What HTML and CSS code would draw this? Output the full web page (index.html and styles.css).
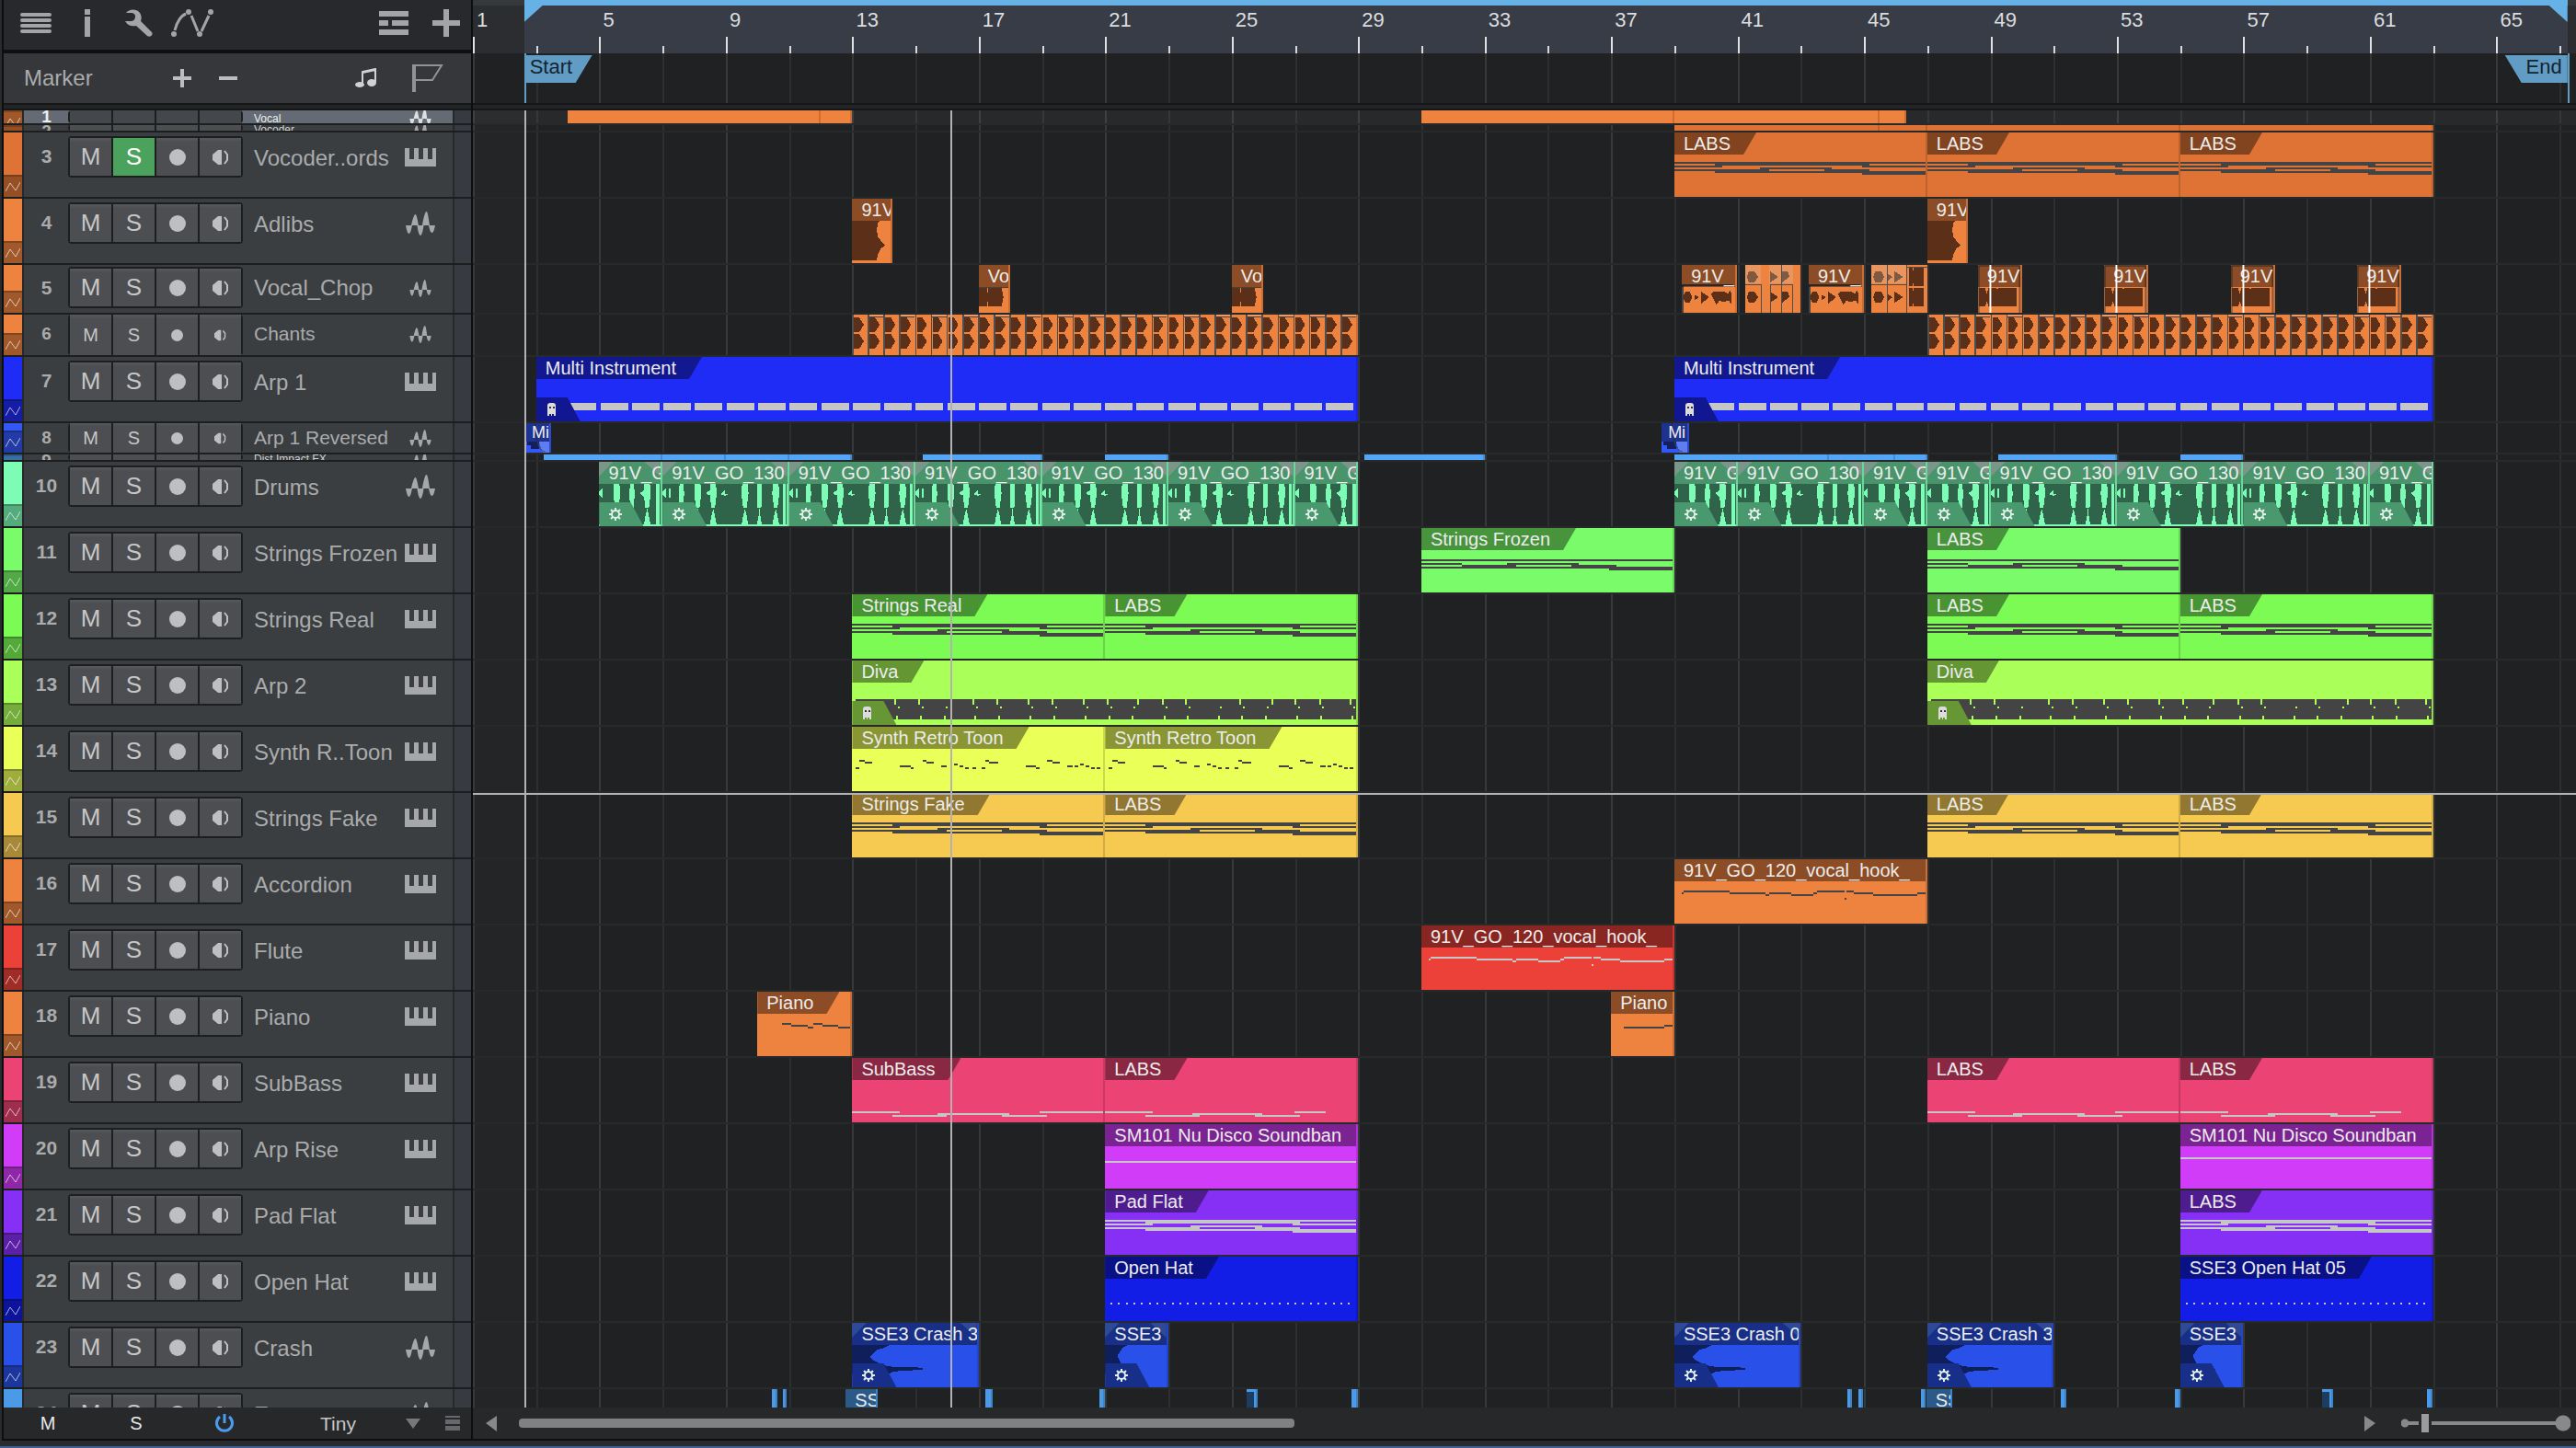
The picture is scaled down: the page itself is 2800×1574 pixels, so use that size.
FILE: index.html
```html
<!DOCTYPE html>
<html lang="en">
<head>
    <meta charset="UTF-8">
    <meta name="viewport" content="width=device-width, initial-scale=1.0">
    <title>Arrangement</title>
    <link rel="stylesheet" href="styles.css">
</head>
<body>
    <div class="app">
        <div class="workspace">
            <!-- Track list -->
            <div class="sidebar">
                <div class="toolbar">
                    <button class="tool menu-tool" aria-label="Menu">
                        <svg width="34" height="22"><path d="M2 2h30M2 8h30M2 14h30M2 20h30" stroke="#a3a4a6" stroke-width="4" stroke-linecap="round"/></svg>
                    </button>
                    <button class="tool info-tool" aria-label="Inspector">
                        <svg width="6" height="30"><path d="M0 0h6v6H0zM0 8h6v22H0z" fill="#a3a4a6"/></svg>
                    </button>
                    <button class="tool wrench-tool" aria-label="Options">
                        <svg width="30" height="30"><path d="M1 4C4 0 12-1 16 4c2 3 2 6 1 9l12 12c2 3-2 6-5 4L12 18c-4 1-9 0-12-5h6c3 0 5-2 5-5S9 4 6 4z" fill="#a3a4a6"/></svg>
                    </button>
                    <button class="tool" aria-label="Automation">
                        <svg width="48" height="31"><path d="M4 23C6 14 11 7 16 5M22 7l7 17M33 24l8-17" fill="none" stroke="#a3a4a6" stroke-width="3"/><g fill="#a3a4a6"><circle cx="3" cy="27" r="3"/><circle cx="19" cy="3" r="3"/><circle cx="31" cy="27" r="3"/><circle cx="43" cy="3" r="3"/></g></svg>
                    </button>
                    <span class="spacer"></span>
                    <button class="tool layers-tool" aria-label="Track list">
                        <svg width="32" height="26"><path d="M0 0h32v6H0zM0 10h10v6H0zM14 10h18v6H14zM0 20h32v6H0z" fill="#a3a4a6"/></svg>
                    </button>
                    <button class="tool" aria-label="Add track">
                        <svg width="30" height="30"><path d="M12 0h6v12h12v6H18v12h-6V18H0v-6h12z" fill="#a3a4a6"/></svg>
                    </button>
                </div>
                <div class="marker-head">
                    <span class="marker-title">Marker</span>
                    <button class="tool plus-tool" aria-label="Add marker">
                        <svg width="20" height="20"><path d="M8 0h4v8h8v4h-8v8H8v-8H0V8h8z" fill="#bcbdbf"/></svg>
                    </button>
                    <button class="tool" aria-label="Remove marker">
                        <svg width="20" height="20"><path d="M0 8h20v4H0z" fill="#bcbdbf"/></svg>
                    </button>
                    <span class="spacer"></span>
                    <button class="tool note-tool" aria-label="Timebase">
                        <svg width="24" height="22"><path d="M8 18V4l14-3v14M8 5l14-3" fill="none" stroke="#d0d1d3" stroke-width="2"/><ellipse cx="5" cy="18" rx="5" ry="3" fill="#d0d1d3"/><ellipse cx="18" cy="16" rx="5" ry="4" fill="#d0d1d3"/></svg>
                    </button>
                    <button class="tool" aria-label="Flag">
                        <svg width="34" height="30"><path d="M1 0v30M3 30V0" stroke="#909294" stroke-width="2"/><path d="M3 1h29L22 17H3" fill="none" stroke="#909294" stroke-width="2"/></svg>
                    </button>
                </div>
                <div class="divider"></div>
                <div class="track-list" id="track-list"></div>
                <div class="side-foot">
                    <button class="foot-btn">M</button>
                    <button class="foot-btn">S</button>
                    <button class="foot-btn" aria-label="Power">
                        <svg width="22" height="20"><path d="M6 3a8.5 8.5 0 1 0 10 0M11 0v10" fill="none" stroke="#4d9bf0" stroke-width="3"/></svg>
                    </button>
                    <select class="size-select" aria-label="Track height"><option>Tiny</option><option>Small</option><option>Normal</option></select>
                    <svg class="drop-arrow" width="16" height="11"><path d="M0 0h16L8 11z" fill="#77787a"/></svg>
                    <button class="tool" aria-label="Layout">
                        <svg width="16" height="16"><path d="M0 0h16v2H0zM0 4h16v5H0zM0 11h16v5H0z" fill="#66686d"/></svg>
                    </button>
                </div>
            </div>

            <!-- Arrangement -->
            <div class="arrange">
                <div class="ruler" id="ruler"></div>
                <div class="marker-lane" id="marker-lane"></div>
                <div class="divider"></div>
                <div class="lanes" id="lanes"></div>
                <div class="arrange-foot">
                    <button class="tool" aria-label="Scroll left"><svg width="12" height="17"><path d="M12 0v17L0 8z" fill="#87898b"/></svg></button>
                    <div class="scroll"><div class="scroll-thumb"></div></div>
                    <button class="tool" aria-label="Scroll right"><svg width="12" height="17"><path d="M0 0v17L12 8z" fill="#87898b"/></svg></button>
                    <input class="zoom" type="range" min="0" max="100" value="11" aria-label="Zoom">
                </div>
            </div>
        </div>
    </div>

    <script src="script.js"></script>
</body>
</html>
```

FILE: styles.css
```css
* {
    box-sizing: border-box;
    margin: 0;
    padding: 0;
}

body {
    font-family: "Liberation Sans", Arial, sans-serif;
    color: #aaabad;
    background-color: #212325;
    overflow: hidden;
}

button {
    border: none;
    background: none;
    color: inherit;
    font-family: inherit;
    cursor: pointer;
}

svg {
    display: block;
}

/* Window frame */
.app {
    height: 100vh;
    padding: 0 0 6px 2px;
    border-bottom: 2px solid #435f92;
    background-color: #292b2d;
}

.workspace {
    display: flex;
    height: 100%;
    border-left: 2px solid #0d0e0f;
    border-bottom: 2px solid #0d0e0f;
}

.spacer {
    flex: 1;
}

.divider {
    flex: none;
    height: 8px;
    background-color: #222426;
    border-top: 2px solid #161719;
    border-bottom: 2px solid #161719;
}

/* Sidebar */
.sidebar {
    display: flex;
    flex-direction: column;
    flex: none;
    width: 510px;
    border-right: 2px solid #0d0e0f;
}

.toolbar {
    display: flex;
    align-items: center;
    flex: none;
    height: 58px;
    padding: 0 12px 4px 18px;
    background-color: #28292d;
    border-bottom: 4px solid #0e0f10;
}

.menu-tool {
    margin-right: 36px;
}

.info-tool {
    margin-right: 38px;
}

.wrench-tool {
    margin-right: 20px;
}

.layers-tool {
    margin-right: 26px;
}

.marker-head {
    display: flex;
    align-items: center;
    flex: none;
    height: 54px;
    padding: 0 30px 0 22px;
    background-color: #36373b;
}

.marker-title {
    width: 162px;
    font-size: 24px;
}

.plus-tool {
    margin-right: 30px;
}

.note-tool {
    margin-right: 38px;
}

/* Track headers */
.track-list {
    flex: 1;
    overflow: hidden;
}

.track {
    display: flex;
    border-bottom: 2px solid #1c1e20;
    background-color: #3b3e40;
    overflow: hidden;
}

.track-color {
    display: flex;
    flex-direction: column;
    width: 22px;
    border-right: 2px solid #26282a;
}

.track-color .auto {
    height: 24px;
    margin-top: auto;
    padding: 6px 2px;
    border-top: 2px solid rgba(0, 0, 0, 0.2);
    background-color: rgba(0, 0, 0, 0.32);
}

.track-num {
    width: 48px;
    padding-left: 1px;
    font-size: 21px;
    font-weight: bold;
    line-height: 52px;
    text-align: center;
}

.track-btns {
    display: flex;
    align-self: flex-start;
    gap: 2px;
    width: 190px;
    height: 45px;
    margin-top: 4px;
    padding: 2px;
    border-radius: 4px;
    background-color: #1c1e20;
}

.track-btns button {
    display: flex;
    align-items: center;
    justify-content: center;
    flex: 1;
    font-size: 26px;
    color: #c5c6c8;
    background: linear-gradient(#58595c, #4d4e51 10%);
}

.track-btns button.on {
    color: #fff;
    background: #4ba25c;
}

.track-name {
    flex: 1;
    padding-left: 12px;
    font-size: 24px;
    line-height: 56px;
    white-space: nowrap;
}

.track-icon {
    display: flex;
    align-items: center;
    justify-content: center;
    width: 34px;
    height: 54px;
    margin-right: 18px;
}

.track-end {
    width: 20px;
    border-left: 2px solid #26282a;
    background-color: #383a41;
}

.track.medium .track-btns {
    margin-top: 2px;
}

.track.medium .track-num,
.track.medium .track-name {
    line-height: 50px;
}

.track.medium .track-icon {
    height: 50px;
}

.track.small .track-btns {
    align-self: stretch;
    height: auto;
    margin-top: 0;
    padding: 0 2px;
}

.track.small .track-btns button {
    font-size: 20px;
}

.track.small .track-num {
    font-size: 19px;
    line-height: 42px;
}

.track.small .track-name {
    font-size: 21px;
    line-height: 42px;
}

.track.small .track-icon {
    height: 42px;
}

.track.short .track-num,
.track.short .track-name {
    line-height: 32px;
}

.track.short .track-icon {
    height: 32px;
}

.track.folded .track-num {
    line-height: 14px;
}

.track.folded .track-name {
    font-size: 12px;
    line-height: 18px;
    color: #d0d1d3;
}

.track.folded .track-icon {
    height: 14px;
}

.track.thin .track-name {
    line-height: 10px;
}

.track.selected,
.track.selected .track-name {
    color: #eee;
    background-color: #646b74;
}

.track.selected .track-btns button {
    background: #44474c;
}

/* Sidebar footer */
.side-foot {
    display: flex;
    align-items: center;
    flex: none;
    height: 34px;
    padding-right: 12px;
    background-color: #27282a;
}

.foot-btn {
    display: flex;
    justify-content: center;
    width: 96px;
    font-size: 20px;
    color: #e8e8e8;
}

.size-select {
    flex: 1;
    padding-left: 56px;
    border: none;
    appearance: none;
    font-family: inherit;
    font-size: 21px;
    color: #c5c6c8;
    background: none;
}

.drop-arrow {
    margin-right: 27px;
}

/* Ruler */
.arrange {
    display: flex;
    flex-direction: column;
    flex: 1;
    min-width: 0;
    position: relative;
}

.ruler {
    position: relative;
    flex: none;
    height: 58px;
    overflow: hidden;
    background-color: #2b2d30;
    border-top: 6px solid #36393c;
}

.loop-range {
    position: absolute;
    top: 0;
    bottom: 0;
    background-color: #373c46;
}

.loop-bar {
    position: absolute;
    z-index: 2;
    top: 0;
    height: 6px;
    background-color: #66b1e6;
}

.loop-corner {
    position: absolute;
    top: 0;
    width: 20px;
    height: 18px;
    background-color: #66b1e6;
}

.loop-corner.left {
    left: 0;
    clip-path: polygon(0 0, 100% 0, 0 100%);
}

.loop-corner.right {
    right: 0;
    clip-path: polygon(0 0, 100% 0, 100% 100%);
}

.tick {
    position: absolute;
    bottom: 0;
    height: 8px;
    border-left: 2px solid #d8d9da;
}

.tick.major {
    height: 48px;
    padding-left: 2px;
    border-image: linear-gradient(transparent 62%, #e0e0e0 62%) 1;
    border-width: 0 0 0 2px;
    font-size: 22px;
    line-height: 24px;
    color: #dcdddf;
}

/* Marker lane */
.marker-lane {
    position: relative;
    flex: none;
    height: 54px;
    overflow: hidden;
    background-color: #1f2122;
}

.marker-tag {
    position: absolute;
    z-index: 2;
    top: 2px;
    height: 30px;
    font-size: 22px;
    line-height: 26px;
    color: #16242e;
    background-color: #619cc5;
}

.marker-tag.start {
    width: 74px;
    padding-left: 6px;
    clip-path: polygon(0 0, 100% 0, calc(100% - 18px) 100%, 0 100%);
}

.marker-tag.end {
    width: 68px;
    padding-right: 6px;
    text-align: right;
    clip-path: polygon(0 0, 100% 0, 100% 100%, 18px 100%);
}

.marker-stem {
    position: absolute;
    top: 0;
    bottom: 0;
    width: 2px;
    background-color: #619cc5;
}

/* Lanes */
.lanes {
    position: relative;
    flex: 1;
    overflow: hidden;
    background-color: #1f2122;
}

.before-start {
    position: absolute;
    top: 0;
    bottom: 0;
    left: 0;
    background-color: #232526;
}

.grid-line {
    position: absolute;
    top: 0;
    bottom: 0;
    width: 2px;
    background-color: #2d2f31;
}

.grid-line.major {
    background-color: #38393b;
}

.lane {
    position: relative;
    border-bottom: 2px solid #28292b;
}

.lane.selected {
    background-color: rgba(255, 255, 255, 0.04);
}

.playhead {
    position: absolute;
    z-index: 3;
    top: 0;
    bottom: 0;
    width: 2px;
    background-color: #b2b2b2;
}

.cursor-row {
    position: absolute;
    z-index: 3;
    top: 742px;
    left: 0;
    right: 0;
    height: 2px;
    background-color: #b2b2b2;
}

/* Clips */
.clip {
    position: absolute;
    top: 0;
    bottom: 0;
    overflow: hidden;
    border-right: 2px solid rgba(0, 0, 0, 0.15);
}

.clip > svg {
    position: absolute;
    top: 0;
    left: 0;
    width: 100%;
    height: 100%;
}

.clip > svg.front {
    z-index: 2;
}

.clip-title {
    position: relative;
    z-index: 1;
    width: max-content;
    height: 24px;
    padding: 0 28px 0 10px;
    font-size: 20px;
    line-height: 24px;
    color: #ececec;
    white-space: nowrap;
    background-color: rgba(0, 0, 0, 0.41);
    clip-path: polygon(0 0, 100% 0, calc(100% - 14px) 100%, 0 100%);
}

.clip.audio .clip-title {
    width: 100%;
    padding-right: 0;
    overflow: hidden;
    clip-path: none;
}

.clip.short .clip-title {
    height: 20px;
    padding-left: 7px;
    font-size: 18px;
    line-height: 20px;
}

.clip.sliced {
    border-right: none;
    background: none;
}

.clip-badge {
    position: absolute;
    z-index: 1;
    bottom: 0;
    left: 0;
    width: 48px;
    height: 26px;
    padding: 6px 0 0 11px;
    clip-path: polygon(0 0, 34px 0, 100% 100%, 0 100%);
}

/* Arrangement footer */
.arrange-foot {
    display: flex;
    align-items: center;
    flex: none;
    height: 34px;
    padding: 0 6px 0 14px;
    background-color: #27282a;
}

.scroll {
    flex: 1;
    margin-left: 24px;
}

.scroll-thumb {
    width: 42%;
    height: 10px;
    border-radius: 4px;
    background-color: #7f8183;
}

.zoom {
    width: 184px;
    height: 20px;
    margin-left: 28px;
    appearance: none;
    background:
        radial-gradient(circle at 4px 10px, #87898b 4px, transparent 5px),
        radial-gradient(circle at calc(100% - 8px) 10px, #87898b 8px, transparent 9px),
        linear-gradient(#87898b, #87898b) center / calc(100% - 8px) 4px no-repeat;
}

.zoom::-webkit-slider-thumb {
    appearance: none;
    width: 14px;
    height: 20px;
    border: solid #27282a;
    border-width: 0 3px;
    background-color: #9b9c9e;
}
```

FILE: script.js
```js
// Number of bars that fit in the visible arrangement
const BARS = 66.52;
const LOOP_START = 2.62;
const LOOP_END = 67.25;
const PLAYHEAD = 16.09;

const DARK = "#444444";
const LIGHT = "#c6c6c6";

// [x, y, width], every note is 2px high. Widths are for an 8 bar clip
const CHORDS = [
    [0, 32, 275], [44, 34, 170], [0, 36, 52], [206, 36, 69], [94, 38, 78],
    [0, 40, 104], [164, 40, 50], [44, 42, 231], [206, 44, 69]
];
const FROZEN = [
    [0, 34, 275], [0, 38, 44], [44, 40, 60], [94, 38, 78], [164, 40, 50], [0, 42, 275], [206, 44, 69]
];
const BASS_A = [[0, 58, 52], [206, 58, 69], [94, 60, 78], [44, 62, 60], [164, 62, 50]];
const BASS_B = [[0, 58, 52], [208, 58, 34], [96, 60, 76], [44, 62, 60], [164, 62, 50]];
const HOOK = [
    [10, 34, 50], [156, 34, 30], [188, 34, 8], [8, 36, 2], [60, 36, 40], [104, 36, 24], [152, 36, 4],
    [196, 36, 22], [266, 36, 9], [100, 38, 4], [128, 38, 24], [218, 38, 48], [186, 42, 2]
];
const RETRO = [
    [8, 36, 6], [78, 36, 4], [146, 36, 4], [214, 36, 6], [14, 38, 8], [82, 38, 8], [150, 38, 10], [220, 38, 8],
    [112, 40, 4], [250, 40, 4], [52, 42, 12], [98, 42, 6], [118, 42, 4], [190, 42, 12], [236, 42, 6],
    [244, 42, 4], [256, 42, 4], [4, 44, 4], [64, 44, 4], [124, 44, 4], [132, 44, 4], [142, 44, 4],
    [202, 44, 4], [262, 44, 4], [268, 44, 4]
];
const PIANO_A = [[28, 34, 10], [62, 34, 10], [38, 36, 18], [72, 36, 18], [56, 38, 6], [90, 38, 13]];
const PIANO_B = [[14, 38, 46], [60, 36, 10]];

const FX = [[3.24, 3.76], [7, 2], [9, 2], [11, 2], [15.24, 3.76], [21, 2], [29.2, 3.8],
    [39, 4.9], [43.9, 2.1], [46, 1], [49.24, 3.76], [55, 2]];
const DRUMS = [[5, 2], [7, 4], [11, 4], [15, 4], [19, 4], [23, 4], [27, 2],
    [39, 2], [41, 4], [45, 2], [47, 2], [49, 4], [53, 4], [57, 4], [61, 2]];
const EXTRA = [[10.46, .17], [10.81, .12], [17.22, .23], [20.83, .17], [28.8, .2], [44.46, .17],
    [44.81, .17], [46.79, .17], [51.22, .17], [54.83, .17], [62.8, .17]];

const tracks = [
    { n: 1, name: "Vocal", h: 16, color: "#ee823f", icon: "wave", size: "small folded selected",
        clips: [[4, 8], [12, 1], [31, 8], [39, 6.5], [45.5, .85]].map(c => ({ at: c[0], len: c[1] })) },
    { n: 2, name: "Vocoder", h: 8, color: "#de7335", icon: "wave", size: "small folded thin",
        clips: [[39, 6.5], [45.5, 1.5], [47, 8], [55, 8]].map(c => ({ at: c[0], len: c[1] })) },
    { n: 3, name: "Vocoder..ords", h: 72, color: "#de7335", icon: "keys", solo: true,
        clips: [39, 47, 55].map(at => ({ at, len: 8, title: "LABS", notes: CHORDS })) },
    { n: 4, name: "Adlibs", h: 72, color: "#ee823f", icon: "wave",
        clips: [13, 47].map(at => ({ at, len: 1.28, title: "91V", type: "adlib" })) },
    { n: 5, name: "Vocal_Chop", h: 54, color: "#ee823f", icon: "wave", size: "medium",
        clips: [
            { at: 17, len: 1, title: "Vo", type: "vo" },
            { at: 25, len: 1, title: "Vo", type: "vo" },
            { at: 39.24, len: 1.75, title: "91V_", type: "chop" },
            { at: 41.23, len: 1.75, type: "slicesA" },
            { at: 43.25, len: 1.75, title: "91V_", type: "chop" },
            { at: 45.23, len: 1.77, type: "slicesB" },
            ...[49, 53, 57, 61].map(b => ({ at: b - .4, len: 1.4, title: "91V", type: "cue" }))
        ] },
    { n: 6, name: "Chants", h: 46, color: "#ee823f", icon: "wave", size: "small",
        clips: [13, 47].map(at => ({ at, len: 16, type: "chants" })) },
    { n: 7, name: "Arp 1", h: 72, color: "#1f2cf5", icon: "keys",
        clips: [{ at: 3, len: 26, title: "Multi Instrument", type: "arp" }, { at: 39, len: 24, title: "Multi Instrument", type: "arp" }] },
    { n: 8, name: "Arp 1 Reversed", h: 34, color: "#3358f5", icon: "wave", size: "small short",
        clips: [{ at: 2.66, len: .82, title: "Mi", type: "reversed" }, { at: 38.6, len: .87, title: "Mi", type: "reversed" }] },
    { n: 9, name: "Dist Impact FX", h: 8, color: "#52a5f7", icon: "wave", size: "small folded thin",
        clips: FX.map(c => ({ at: c[0], len: c[1] })) },
    { n: 10, name: "Drums", h: 72, color: "#7dfcb6", icon: "wave",
        clips: DRUMS.map(c => ({ at: c[0], len: c[1], title: c[1] === 2 ? "91V_G" : "91V_GO_130", type: "drums" })) },
    { n: 11, name: "Strings Frozen", h: 72, color: "#7afb69", icon: "keys",
        clips: [{ at: 31, len: 8, title: "Strings Frozen", notes: FROZEN }, { at: 47, len: 8, title: "LABS", notes: FROZEN }] },
    { n: 12, name: "Strings Real", h: 72, color: "#7dfb55", icon: "keys",
        clips: [[13, "Strings Real"], [21, "LABS"], [47, "LABS"], [55, "LABS"]].map(c => ({ at: c[0], len: 8, title: c[1], notes: CHORDS })) },
    { n: 13, name: "Arp 2", h: 72, color: "#abff59", icon: "keys",
        clips: [13, 47].map(at => ({ at, len: 16, title: "Diva", type: "diva" })) },
    { n: 14, name: "Synth R..Toon", h: 72, color: "#ebff59", icon: "keys",
        clips: [13, 21].map(at => ({ at, len: 8, title: "Synth Retro Toon", notes: RETRO })) },
    { n: 15, name: "Strings Fake", h: 72, color: "#f6ca51", icon: "keys",
        clips: [[13, "Strings Fake"], [21, "LABS"], [47, "LABS"], [55, "LABS"]].map(c => ({ at: c[0], len: 8, title: c[1], notes: CHORDS })) },
    { n: 16, name: "Accordion", h: 72, color: "#ee823f", icon: "keys",
        clips: [{ at: 39, len: 8, title: "91V_GO_120_vocal_hook_", notes: HOOK, type: "full" }] },
    { n: 17, name: "Flute", h: 72, color: "#eb4138", icon: "keys", ink: LIGHT,
        clips: [{ at: 31, len: 8, title: "91V_GO_120_vocal_hook_", notes: HOOK, type: "full" }] },
    { n: 18, name: "Piano", h: 72, color: "#ee823f", icon: "keys",
        clips: [{ at: 10, len: 3, title: "Piano", notes: PIANO_A }, { at: 37, len: 2, title: "Piano", notes: PIANO_B, type: "full" }] },
    { n: 19, name: "SubBass", h: 72, color: "#eb4373", icon: "keys", ink: LIGHT,
        clips: [
            { at: 13, len: 8, title: "SubBass", notes: BASS_A }, { at: 21, len: 8, title: "LABS", notes: BASS_B },
            { at: 47, len: 8, title: "LABS", notes: BASS_A }, { at: 55, len: 8, title: "LABS", notes: BASS_B }
        ] },
    { n: 20, name: "Arp Rise", h: 72, color: "#d13cf8", icon: "keys", ink: LIGHT,
        clips: [
            { at: 21, len: 8, title: "SM101 Nu Disco Soundban", notes: [[0, 40, 275]], type: "full" },
            { at: 55, len: 8, title: "SM101 Nu Disco Soundban", notes: [[0, 36, 275]], type: "full" }
        ] },
    { n: 21, name: "Pad Flat", h: 72, color: "#8730f5", icon: "keys", ink: LIGHT,
        clips: [{ at: 21, len: 8, title: "Pad Flat", notes: CHORDS }, { at: 55, len: 8, title: "LABS", notes: CHORDS }] },
    { n: 22, name: "Open Hat", h: 72, color: "#121ee6", icon: "keys", ink: LIGHT,
        clips: [{ at: 21, len: 8, title: "Open Hat", type: "hats" }, { at: 55, len: 8, title: "SSE3 Open Hat 05", type: "hats" }] },
    { n: 23, name: "Crash", h: 72, color: "#2950e8", icon: "wave",
        clips: [[13, 4, "SSE3 Crash 3"], [21, 2, "SSE3"], [39, 4, "SSE3 Crash 0"], [47, 4, "SSE3 Crash 3"], [55, 2, "SSE3"]].map(c => ({ at: c[0], len: c[1], title: c[2], type: "crash" })) },
    { n: 24, name: "Extra", h: 72, color: "#4a9ae8", icon: "wave",
        clips: [
            ...EXTRA.map(c => ({ at: c[0], len: c[1] })),
            { at: 12.79, len: 1, title: "SS", type: "full" }, { at: 46.97, len: .81, title: "SS", type: "full" },
            { at: 25.48, len: .35, type: "hollow" }, { at: 59.49, len: .35, type: "hollow" }
        ] }
];

const ghost = `<svg width="12" height="14"><path d="M1 3Q1 0 4 0h3q3 0 3 3v11H8v-2H6v2H5v-2H3v2H1z" fill="#dcdcdc"/><path d="M3 4h2v2H3zM7 4h2v2H7z" fill="#333"/></svg>`;
const gear = `<svg width="14" height="14"><circle cx="7" cy="7" r="4" fill="none" stroke="#e2eee8" stroke-width="2"/><path d="M7 0v3M7 11v3M0 7h3M11 7h3M2 2l2 2M10 10l2 2M12 2l-2 2M4 10l-2 2" stroke="#e2eee8" stroke-width="2"/></svg>`;
const zigzag = `<svg width="16" height="10"><path d="M0 10L5 1l6 8 5-9" fill="none" stroke="#fff" stroke-opacity=".65"/></svg>`;

function pct(bars) {
    return (bars / BARS * 100).toFixed(3) + "%";
}

function stretch(w, h, body) {
    return `<svg viewBox="0 0 ${w} ${h}" preserveAspectRatio="none" shape-rendering="crispEdges">${body}</svg>`;
}

function noteRects(notes, ink) {
    return notes.map(n => `<rect x="${n[0]}" y="${n[1]}" width="${n[2]}" height="2" fill="${ink}"/>`).join("");
}

function badge(color, icon) {
    return `<div class="clip-badge" style="background-color:${color}">${icon}</div>`;
}

// Fade handles in the two top corners
function fades(w, color) {
    return `<svg viewBox="0 0 ${w} 70" preserveAspectRatio="none"><path d="M0 0h16L0 16zM${w} 0h-18l18 16z" fill="${color}"/></svg>`;
}

// Diamond shaped transient, split into two channels
function lens(x, w) {
    return `M${x - w / 2} 24h${w}l1 10-${w / 2 - 1} 16h-4l-${w / 2 - 1}-16zM${x} 51l${w / 2 - 1} 8 2 11h-${w + 2}l2-11z`;
}

const art = {
    adlib: () => stretch(44, 70, `<path d="M0 24h32l-2 2-2 8 2 8 4 5 4 4-5 3-3 6-2 7H0z" fill="#5c3018"/>`),
    vo: () => stretch(34, 52, `<path d="M0 24h34v1H0z" fill="${DARK}"/><path d="M0 25h9l1 5 1-5h15l2 10-2 10H11l-1-5-1 5H0z" fill="#5c3018"/>`),
    chop: () => stretch(60, 52, `<path d="M0 22h58M1 22v30" stroke="${DARK}" stroke-width="2"/><path d="M4 29h5l3 6-3 6H4l-3-6zM14 32l5 3-5 4zM22 29l9 6-9 7zM33 32l3-3h11l5 2 2-3 2 3v12l-3-4-6 1-5-1-3 4-4-7z" fill="#5c3018"/>`),
    slicesA: () => stretch(60, 52, `<rect width="60" height="52" fill="#ee823f"/><path d="M0 0h17v20H0zM26 0h26v20H26z" fill="#e8955f"/>
        <path d="M4 7h6l4 6-4 6H4l-2-6zM27 7l9 6-9 6zM40 7h6l2 6-8 6z" fill="#7f5a40"/>
        <path d="M4 29h6l4 6-4 6H4l-2-6zM27 29l9 6-9 6zM40 29h6l2 6-8 6z" fill="#5c3018"/>
        <path d="M0 21h17v31M27 52V21h24v31M39 0v52" fill="none" stroke="#4d4e50" stroke-width="1"/>`),
    slicesB: () => stretch(60, 52, `<rect width="60" height="52" fill="#ee823f"/><path d="M0 0h38v20H0z" fill="#e8955f"/>
        <path d="M4 7h7l3 6-3 6H4l-2-6zM18 10l5 3-5 4zM25 7l9 6-9 6z" fill="#7f5a40"/>
        <path d="M4 29h7l3 6-3 6H4l-2-6zM18 32l5 3-5 4zM25 29l9 6-9 6z" fill="#5c3018"/>
        <path d="M40 3h4l1 3 1-3h10v20H46l-1-3-1 3h-4zM40 25h4l1 3 1-3h10v20H46l-1-3-1 3h-4z" fill="#5c3018"/>
        <path d="M0 21h38V2h22M17 0v52M38 0v52" fill="none" stroke="#4d4e50" stroke-width="1"/>`),
    cue: () => stretch(48, 52, `<path d="M1 52V1h46v51" fill="none" stroke="${DARK}" stroke-width="1"/><path d="M1 25h7l2 6 2-6h9l1 2 1-2h21v20H12l-2-5-2 5H1z" fill="#5c3018"/>`) +
        `<svg class="front" viewBox="0 0 48 52" preserveAspectRatio="none"><rect x="13" width="2" height="52" fill="#fff"/></svg>`,
    chants: () => {
        let body = "";
        for (let i = 0; i < 32; i++) {
            const x = i * 17.2;
            const top = i % 2 ? `<rect x="${x}" width="17" height="2" fill="#ee9a68"/><rect x="${x}" y="2" width="17" height="1" fill="${DARK}"/>` : "";
            body += `${top}<path d="M${x + 2} 3h6l5 8-5 8h-6zM${x + 2} 21h6l5 8-5 8h-6z" fill="#5c3018"/><rect x="${x}" width="1.6" height="44" fill="#4d4e50"/>`;
        }
        return stretch(550, 44, body);
    },
    arp: clip => {
        let body = "";
        for (let i = 0; i < clip.len; i++) {
            body += `<rect x="${i * 34.35 + 1}" y="50" width="30" height="8" fill="${LIGHT}"/>`;
        }
        return stretch(clip.len * 34.35, 70, body) + badge("#111791", ghost);
    },
    reversed: () => stretch(28, 32, `<path d="M0 20h28v12H0z" fill="#3358f5"/><path d="M16 20h12v12H20z" fill="#5f7df0"/><path d="M2 20h14v8H6v-4H2z" fill="#13205f"/><path d="M11 0c2 12 2 30 12 31" fill="none" stroke="${DARK}"/>`),
    drums: clip => {
        const w = clip.len * 34.35;
        const hits = clip.len === 2 ? [[20, 6], [37, 4], [54, 6]] : [[21, 4], [39, 6], [56, 6], [91, 6], [107, 4], [125, 6]];
        let path = hits.map(h => lens(h[0], h[1])).join("");
        path += "M0 68h" + w + "v2H0zM" + (w - 5) + " 24h4v46h-4zM0 32l4-3v10l-4-3z";
        if (clip.len === 4) {
            path += "M7 29h2v10H7zM48 34l4-3v6zM64 35l5-4v4l4 0-4 2z";
        } else {
            path += "M46 34l4-3v7z";
        }
        return stretch(w, 70, `<rect y="24" width="${w}" height="46" fill="#2f634a"/><path d="${path}" fill="#7dfcb6"/>`) +
            fades(w, "#d0ffe8") + badge("#4a986e", gear);
    },
    diva: () => {
        const top = [47, 73, 133, 159, 193, 219, 253, 279, 312, 339, 364, 424, 459, 484, 511, 544];
        const low = [49, 75, 101, 135, 161, 195, 221, 255, 281, 306, 341, 366, 401, 426, 452, 486, 512, 546];
        return stretch(550, 70, `<rect x="4" y="42" width="546" height="22" fill="${DARK}"/>` +
            top.map(x => `<rect x="${x - 1}" y="42" width="2" height="6" fill="#abff59"/>`).join("") +
            low.map(x => `<rect x="${x - 1}" y="60" width="2" height="4" fill="#abff59"/><rect x="${x + 1}" y="50" width="2" height="2" fill="#abff59"/>`).join("")) +
            badge("#679734", ghost);
    },
    hats: () => stretch(275, 70, `<path d="M6 51h269" stroke="${LIGHT}" stroke-width="2" stroke-dasharray="2 6.4"/>`),
    crash: clip => {
        const w = clip.len * 34.35;
        const wave = clip.len === 4
            ? "M0 24h42l-6 3-8 2-4 4-4 4 4 4 8 4 8 2 8 1h20l10 1v2l-22 1-10 1-6 3H0z"
            : "M0 24h26l-6 3-3 4-3 5 2 4 2 5 12 4 10 1-4 2-6 3H0z";
        return stretch(w, 70, `<path d="${wave}" fill="#0f1f5c"/>`) + fades(w, "#4f7cff") + badge("#172f89", gear);
    },
    hollow: () => stretch(12, 70, `<rect y="3" width="10" height="67" fill="#1c3d5f"/>`)
};

const fullTitle = ["adlib", "vo", "chop", "cue", "reversed", "drums", "crash", "full"];

function renderClip(track, clip) {
    const classes = ["clip"];
    if (fullTitle.includes(clip.type)) classes.push("audio");
    if (track.h === 34) classes.push("short");
    if (clip.type === "slicesA" || clip.type === "slicesB") classes.push("sliced");

    const ink = track.ink || DARK;
    let body = clip.title ? `<div class="clip-title">${clip.title}</div>` : "";
    if (clip.notes) body += stretch(Math.round(clip.len * 34.35), 70, noteRects(clip.notes, ink));
    if (art[clip.type]) body += art[clip.type](clip);

    return `<div class="${classes.join(" ")}" style="left:${pct(clip.at - 1)};width:${pct(clip.len)};background-color:${track.color}">${body}</div>`;
}

function trackIcon(track) {
    if (track.icon === "keys") {
        return `<svg width="34" height="20"><path d="M0 0h5v12h5V0h5v12h5V0h5v12h5V0h4v20H0z" fill="#a6a7a9"/></svg>`;
    }
    const big = track.h === 72;
    return `<svg width="${big ? 32 : 24}" height="${big ? 26 : 19}" viewBox="0 0 32 26"><path d="M0 15H7C6 20 5 24 3.5 24S1 20 0 15ZM6 15C7 10 9 3 10.5 3S13 10 14 15ZM12.5 15H19.5C19 20 17.5 26 16 26S13 20 12.5 15ZM18 15C19 8 21 0 22.5 0S25 8 26 15ZM25 15H32C31 20 30 23 28.5 23S26 20 25 15Z" fill="${track.n === 1 ? "#dddee0" : "#a6a7a9"}"/></svg>`;
}

function trackButtons(track) {
    if (track.h < 20) {
        return `<button aria-label="Mute"></button><button aria-label="Solo"></button><button aria-label="Record"></button><button aria-label="Monitor"></button>`;
    }
    const small = (track.size || "").includes("small");
    const icon = small ? 13 : 18;
    return `
        <button>M</button>
        <button class="${track.solo ? "on" : ""}">S</button>
        <button aria-label="Record"><svg width="${icon}" height="${icon}" viewBox="0 0 18 18"><circle cx="9" cy="9" r="9" fill="#bebfc1"/></svg></button>
        <button aria-label="Monitor"><svg width="${icon}" height="${icon}" viewBox="0 0 18 18"><path d="M10 1v16H6L0 12V6l6-5z" fill="#bebfc1"/><path d="M13 2l3 4v6l-3 4" fill="none" stroke="#bebfc1" stroke-width="2"/></svg></button>
    `;
}

function renderTrack(track) {
    return `
        <div class="track ${track.size || ""}" style="height:${track.h}px">
            <div class="track-color" style="background-color:${track.color}"><div class="auto">${zigzag}</div></div>
            <div class="track-num">${track.n}</div>
            <div class="track-btns">${trackButtons(track)}</div>
            <div class="track-name">${track.name}</div>
            <div class="track-icon">${trackIcon(track)}</div>
            <div class="track-end"></div>
        </div>
    `;
}

function gridLines() {
    let html = "";
    for (let bar = 1; bar <= 67; bar += 2) {
        html += `<div class="grid-line ${bar % 4 === 1 ? "major" : ""}" style="left:${pct(bar - 1)}"></div>`;
    }
    return html;
}

function renderRuler() {
    const left = pct(LOOP_START - 1);
    const width = pct(LOOP_END - LOOP_START);
    let html = `<div class="loop-range" style="left:${left};width:${width}"><div class="loop-corner left"></div><div class="loop-corner right"></div></div>`;
    for (let bar = 1; bar <= 67; bar += 2) {
        const major = bar % 4 === 1;
        html += `<div class="tick ${major ? "major" : ""}" style="left:${pct(bar - 1)}">${major ? bar : ""}</div>`;
    }
    document.getElementById("ruler").innerHTML = html;
    document.getElementById("ruler").insertAdjacentHTML("afterend", `<div class="loop-bar" style="left:${left};width:${width}"></div>`);

    document.getElementById("marker-lane").innerHTML = gridLines() +
        `<div class="marker-tag start" style="left:${left}">Start</div>
         <div class="marker-stem" style="left:${left}"></div>
         <div class="marker-tag end" style="right:calc(100% - ${pct(LOOP_END - 1)})">End</div>
         <div class="marker-stem" style="left:${pct(LOOP_END - 1)}"></div>`;
}

function renderLanes() {
    document.getElementById("lanes").innerHTML =
        `<div class="before-start" style="width:${pct(LOOP_START - 1)}"></div>` + gridLines() +
        tracks.map(t => `<div class="lane ${t.n === 1 ? "selected" : ""}" style="height:${t.h}px">${t.clips.map(c => renderClip(t, c)).join("")}</div>`).join("") +
        `<div class="playhead" style="left:${pct(LOOP_START - 1)}"></div>
         <div class="playhead" style="left:${pct(PLAYHEAD - 1)}"></div>
         <div class="cursor-row"></div>`;
}

document.getElementById("track-list").innerHTML = tracks.map(renderTrack).join("");
renderRuler();
renderLanes();
```
